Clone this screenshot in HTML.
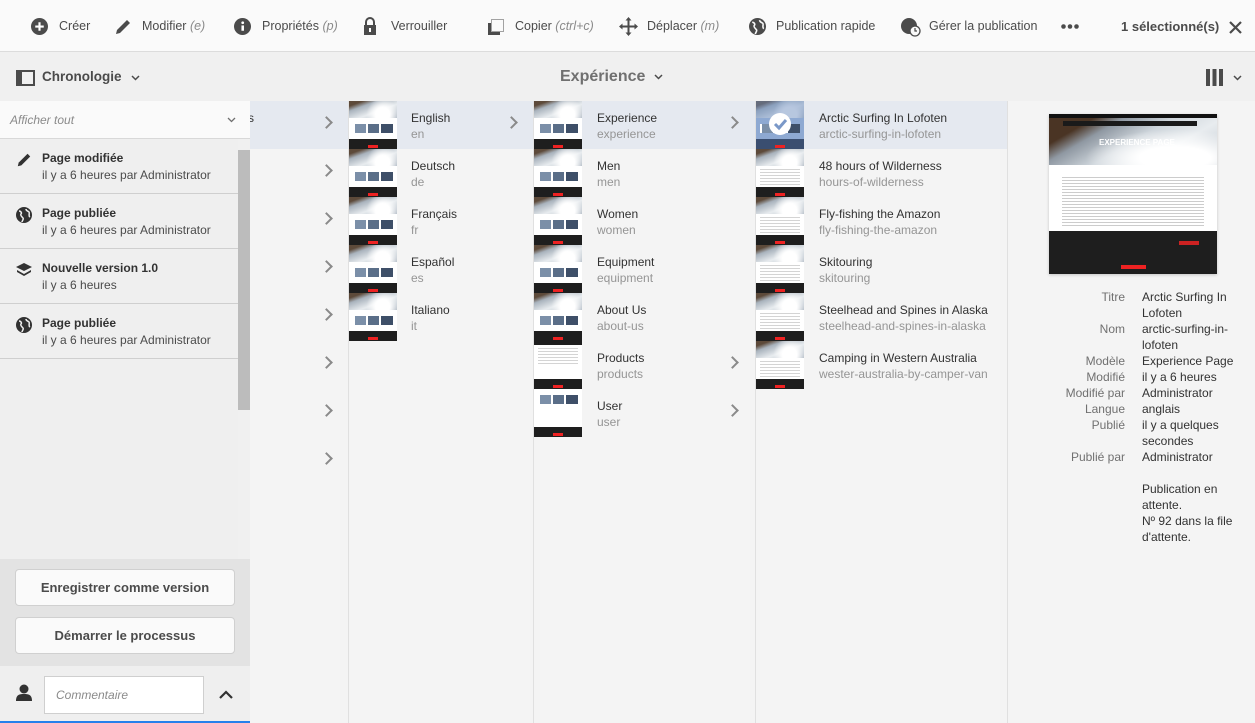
<!DOCTYPE html>
<html><head><meta charset="utf-8"><style>
*{box-sizing:border-box;margin:0;padding:0}
body{width:1255px;height:723px;overflow:hidden;font-family:"Liberation Sans",sans-serif;background:#f4f4f4;color:#323232;position:relative;font-size:13px}
.abs{position:absolute}
.tb{left:0;top:0;width:1255px;height:52px;background:#fafafa;border-bottom:1px solid #dcdcdc}
.tbi{position:absolute;top:19px;font-size:12.5px;color:#4b4b4b;white-space:nowrap}
.tbi i{color:#8a8a8a}
.hd{left:0;top:52px;width:1255px;height:49px;background:#f0f0f0}
.rail{left:0;top:101px;width:250px;height:622px;background:#efefef}
.col{top:101px;height:622px;border-right:1px solid #e0e0e0;background:#f4f4f4}
.row{position:absolute;height:48px;left:0;right:0}
.row.sel{background:#e5e9f0}
.row .t{position:absolute;top:10px;font-size:12px;color:#323232;white-space:nowrap}
.row .s{position:absolute;top:26px;font-size:12px;color:#959595;white-space:nowrap}
.chev{position:absolute;top:17px;width:9px;height:9px;border-right:2px solid #8a8a8a;border-top:2px solid #8a8a8a;transform:rotate(45deg)}
.th{position:absolute;left:0;top:0;width:48px;height:48px;overflow:hidden;background:#fff}
.th .a{height:17px;background:radial-gradient(circle at 70% 80%,#fff 0 20%,transparent 45%),linear-gradient(160deg,#5d4a3a 0 15%,#a9b3bd 30%,#e8ecef 60%,#aab4bf)}
.th .b{height:21px;background:#fff;position:relative}
.th .b:before{content:"";position:absolute;left:4px;top:6px;width:40px;height:9px;background:linear-gradient(90deg,#fff 0 2px,#7b8fa8 2px 13px,#fff 13px 15px,#5a6e88 15px 26px,#fff 26px 28px,#3e4f68 28px)}
.th .c{height:10px;background:#1e1e1e;position:relative}
.th .c:after{content:"";position:absolute;left:19px;top:6px;width:10px;height:3px;background:#e22}
.th.txt .b:before{left:4px;width:40px;top:3px;height:16px;background:repeating-linear-gradient(#d4d4d4 0 1px,#fff 1px 3px)}
.ri{position:absolute;left:0;width:238px;height:55px;border-bottom:1px solid #cfcfcf}
.ri b{position:absolute;left:42px;top:12px;font-size:12px;color:#323232}
.ri span{position:absolute;left:42px;top:29px;font-size:12px;color:#4b4b4b}
.btn{position:absolute;left:15px;width:220px;height:37px;background:#fafafa;border:1px solid #d0d0d0;border-radius:4px;font-weight:bold;font-size:13px;color:#4b4b4b;text-align:center;line-height:35px}
.pl{position:absolute;font-size:12px;color:#707070;text-align:right;width:100px;left:1025px}
.pv{position:absolute;font-size:12px;color:#323232;left:1142px;line-height:16px;width:110px}
</style></head><body>
<div class="abs tb"></div>
<svg class="abs" style="left:31px;top:18px" width="17" height="17" viewBox="0 0 16 16"><circle cx="8" cy="8" r="8" fill="#4b4b4b"/><path d="M8 4v8M4 8h8" stroke="#fff" stroke-width="2"/></svg>
<div class="tbi" style="left:59px">Créer</div>
<svg class="abs" style="left:114px;top:18px" width="18" height="18" viewBox="0 0 18 18"><path d="M2 16l1-4L13 2l3 3L6 15z" fill="#4b4b4b"/></svg>
<div class="tbi" style="left:142px">Modifier <i>(e)</i></div>
<svg class="abs" style="left:234px;top:18px" width="17" height="17" viewBox="0 0 16 16"><circle cx="8" cy="8" r="8" fill="#4b4b4b"/><rect x="7" y="7" width="2.4" height="5" fill="#fff"/><circle cx="8.2" cy="4.5" r="1.3" fill="#fff"/></svg>
<div class="tbi" style="left:262px">Propriétés <i>(p)</i></div>
<svg class="abs" style="left:362px;top:17px" width="16" height="19" viewBox="0 0 16 19"><path d="M4 8V5a4 4 0 0 1 8 0v3" fill="none" stroke="#4b4b4b" stroke-width="2"/><rect x="2" y="8" width="12" height="10" fill="#4b4b4b"/><rect x="7" y="11" width="2" height="4" fill="#fff"/></svg>
<div class="tbi" style="left:391px">Verrouiller</div>
<svg class="abs" style="left:487px;top:19px" width="18" height="17" viewBox="0 0 18 17"><rect x="4.5" y="0.5" width="12" height="12" fill="none" stroke="#4b4b4b" stroke-dasharray="1 1"/><path d="M1 4h3v9h9v3H1z" fill="#4b4b4b"/></svg>
<div class="tbi" style="left:515px">Copier <i>(ctrl+c)</i></div>
<svg class="abs" style="left:619px;top:17px" width="19" height="19" viewBox="0 0 19 19"><path d="M9.5 1v17M1 9.5h17" stroke="#4b4b4b" stroke-width="2"/><path d="M9.5 0l3 3.5h-6zM9.5 19l3-3.5h-6zM0 9.5l3.5-3v6zM19 9.5l-3.5-3v6z" fill="#4b4b4b"/></svg>
<div class="tbi" style="left:647px">Déplacer <i>(m)</i></div>
<svg class="abs" style="left:749px;top:18px" width="17" height="17" viewBox="0 0 16 16"><circle cx="8" cy="8" r="8" fill="#4b4b4b"/><path d="M3 4c2 0 3 2 2 3s1 3 2 4-1 3-1 4M10 2c0 2 2 2 3 3s-1 4 1 5" stroke="#fafafa" stroke-width="1.5" fill="none"/></svg>
<div class="tbi" style="left:776px">Publication rapide</div>
<svg class="abs" style="left:901px;top:18px" width="20" height="19" viewBox="0 0 20 19"><circle cx="8" cy="8" r="8" fill="#4b4b4b"/><circle cx="14" cy="13" r="5" fill="#fafafa" stroke="#4b4b4b" stroke-width="1.3"/><path d="M14 10v3h2" stroke="#4b4b4b" stroke-width="1.2" fill="none"/></svg>
<div class="tbi" style="left:929px">Gérer la publication</div>
<svg class="abs" style="left:1061px;top:24px" width="18" height="5"><circle cx="2.5" cy="2.5" r="2.3" fill="#4b4b4b"/><circle cx="9" cy="2.5" r="2.3" fill="#4b4b4b"/><circle cx="15.5" cy="2.5" r="2.3" fill="#4b4b4b"/></svg>
<div class="tbi" style="left:1121px;font-weight:bold;color:#4b4b4b;font-size:13px">1 sélectionné(s)</div>
<svg class="abs" style="left:1229px;top:21px" width="13" height="13" viewBox="0 0 13 13"><path d="M1 1l11 11M12 1L1 12" stroke="#4b4b4b" stroke-width="2.2"/></svg>

<div class="abs hd"></div>
<svg class="abs" style="left:16px;top:70px" width="19" height="16" viewBox="0 0 19 16"><rect x="1" y="1" width="17" height="14" fill="none" stroke="#4b4b4b" stroke-width="2"/><rect x="1" y="1" width="5" height="14" fill="#4b4b4b"/></svg>
<div class="abs" style="left:42px;top:69px;font-weight:bold;font-size:13.5px;color:#4b4b4b">Chronologie</div>
<svg class="abs" style="left:131px;top:75px" width="9" height="6"><path d="M1 1l3.5 3.5L8 1" stroke="#4b4b4b" stroke-width="1.5" fill="none"/></svg>
<div class="abs" style="left:560px;top:68px;font-weight:bold;font-size:16px;color:#707070">Expérience</div>
<svg class="abs" style="left:654px;top:74px" width="9" height="6"><path d="M1 1l3.5 3.5L8 1" stroke="#4b4b4b" stroke-width="1.5" fill="none"/></svg>
<svg class="abs" style="left:1206px;top:69px" width="18" height="17"><rect x="0" y="0" width="4" height="17" fill="#4b4b4b"/><rect x="6.5" y="0" width="4" height="17" fill="#4b4b4b"/><rect x="13" y="0" width="4" height="17" fill="#4b4b4b"/></svg>
<svg class="abs" style="left:1233px;top:75px" width="9" height="6"><path d="M1 1l3.5 3.5L8 1" stroke="#4b4b4b" stroke-width="1.5" fill="none"/></svg>

<!-- col0 -->
<div class="abs col" style="left:250px;width:99px">
  <div class="row sel" style="top:0"><div class="t" style="left:-2px">s</div><div class="chev" style="left:72px"></div></div>
  <div class="row" style="top:48px"><div class="chev" style="left:72px"></div></div>
  <div class="row" style="top:96px"><div class="chev" style="left:72px"></div></div>
  <div class="row" style="top:144px"><div class="chev" style="left:72px"></div></div>
  <div class="row" style="top:192px"><div class="chev" style="left:72px"></div></div>
  <div class="row" style="top:240px"><div class="chev" style="left:72px"></div></div>
  <div class="row" style="top:288px"><div class="chev" style="left:72px"></div></div>
  <div class="row" style="top:336px"><div class="chev" style="left:72px"></div></div>
</div>
<!-- col1 -->
<div class="abs col" style="left:349px;width:185px">
  <div class="row sel" style="top:0"><div class="th"><div class="a"></div><div class="b"></div><div class="c"></div></div><div class="t" style="left:62px">English</div><div class="s" style="left:62px">en</div><div class="chev" style="left:158px"></div></div>
  <div class="row" style="top:48px"><div class="th"><div class="a"></div><div class="b"></div><div class="c"></div></div><div class="t" style="left:62px">Deutsch</div><div class="s" style="left:62px">de</div></div>
  <div class="row" style="top:96px"><div class="th"><div class="a"></div><div class="b"></div><div class="c"></div></div><div class="t" style="left:62px">Français</div><div class="s" style="left:62px">fr</div></div>
  <div class="row" style="top:144px"><div class="th"><div class="a"></div><div class="b"></div><div class="c"></div></div><div class="t" style="left:62px">Español</div><div class="s" style="left:62px">es</div></div>
  <div class="row" style="top:192px"><div class="th"><div class="a"></div><div class="b"></div><div class="c"></div></div><div class="t" style="left:62px">Italiano</div><div class="s" style="left:62px">it</div></div>
</div>
<!-- col2 -->
<div class="abs col" style="left:534px;width:222px">
  <div class="row sel" style="top:0"><div class="th"><div class="a"></div><div class="b"></div><div class="c"></div></div><div class="t" style="left:63px">Experience</div><div class="s" style="left:63px">experience</div><div class="chev" style="left:194px"></div></div>
  <div class="row" style="top:48px"><div class="th"><div class="a"></div><div class="b"></div><div class="c"></div></div><div class="t" style="left:63px">Men</div><div class="s" style="left:63px">men</div></div>
  <div class="row" style="top:96px"><div class="th"><div class="a"></div><div class="b"></div><div class="c"></div></div><div class="t" style="left:63px">Women</div><div class="s" style="left:63px">women</div></div>
  <div class="row" style="top:144px"><div class="th"><div class="a"></div><div class="b"></div><div class="c"></div></div><div class="t" style="left:63px">Equipment</div><div class="s" style="left:63px">equipment</div></div>
  <div class="row" style="top:192px"><div class="th"><div class="a"></div><div class="b"></div><div class="c"></div></div><div class="t" style="left:63px">About Us</div><div class="s" style="left:63px">about-us</div></div>
  <div class="row" style="top:240px"><div class="th txt"><div class="c" style="height:4px"></div><div class="b" style="height:34px"></div><div class="c"></div></div><div class="t" style="left:63px">Products</div><div class="s" style="left:63px">products</div><div class="chev" style="left:194px"></div></div>
  <div class="row" style="top:288px"><div class="th"><div class="b" style="height:38px;background:#fff"></div><div class="c"></div></div><div class="t" style="left:63px">User</div><div class="s" style="left:63px">user</div><div class="chev" style="left:194px"></div></div>
</div>
<!-- col3 -->
<div class="abs col" style="left:756px;width:252px">
  <div class="row sel" style="top:0"><div class="th" style="background:#6f8fc0"><div class="a" style="opacity:.5"></div><div class="b" style="background:#8ea9d2"></div><div class="c" style="background:#3a4e70"></div><svg style="position:absolute;left:13px;top:12px" width="22" height="22"><circle cx="11" cy="11" r="11" fill="#fff"/><path d="M6 11l4 4 7-8" stroke="#7a98c8" stroke-width="3" fill="none"/></svg></div><div class="t" style="left:63px">Arctic Surfing In Lofoten</div><div class="s" style="left:63px">arctic-surfing-in-lofoten</div></div>
  <div class="row" style="top:48px"><div class="th txt"><div class="a"></div><div class="b"></div><div class="c"></div></div><div class="t" style="left:63px">48 hours of Wilderness</div><div class="s" style="left:63px">hours-of-wilderness</div></div>
  <div class="row" style="top:96px"><div class="th txt"><div class="a"></div><div class="b"></div><div class="c"></div></div><div class="t" style="left:63px">Fly-fishing the Amazon</div><div class="s" style="left:63px">fly-fishing-the-amazon</div></div>
  <div class="row" style="top:144px"><div class="th txt"><div class="a"></div><div class="b"></div><div class="c"></div></div><div class="t" style="left:63px">Skitouring</div><div class="s" style="left:63px">skitouring</div></div>
  <div class="row" style="top:192px"><div class="th txt"><div class="a"></div><div class="b"></div><div class="c"></div></div><div class="t" style="left:63px">Steelhead and Spines in Alaska</div><div class="s" style="left:63px">steelhead-and-spines-in-alaska</div></div>
  <div class="row" style="top:240px"><div class="th txt"><div class="a"></div><div class="b"></div><div class="c"></div></div><div class="t" style="left:63px">Camping in Western Australia</div><div class="s" style="left:63px">wester-australia-by-camper-van</div></div>
</div>
<!-- preview -->
<div class="abs" style="left:1049px;top:114px;width:168px;height:160px;background:#fff;box-shadow:0 1px 3px rgba(0,0,0,.2)">
  <div style="height:4px;background:#111"></div>
  <div style="height:47px;background:radial-gradient(ellipse at 75% 85%,#fff 0 20%,transparent 50%),linear-gradient(150deg,#4a3424 0 18%,#8f98a2 30%,#cfd6dc 50%,#e8ecef 70%,#c0c8d0);position:relative"><div style="position:absolute;left:14px;top:3px;width:134px;height:5px;background:#1a1a1a"></div><div style="position:absolute;left:50px;top:20px;color:#fff;font-size:8px;font-weight:bold">EXPERIENCE PAGE</div></div>
  <div style="height:66px;padding:12px 13px 0;background:#fff"><div style="height:50px;background:repeating-linear-gradient(#ccc 0 1px,#fff 1px 3px)"></div></div>
  <div style="height:43px;background:#1e1e1e;position:relative"><div style="position:absolute;left:72px;top:34px;width:25px;height:4px;background:#e22"></div><div style="position:absolute;left:130px;top:10px;width:20px;height:4px;background:#c22"></div></div>
</div>
<div class="pl" style="top:290px">Titre</div><div class="pv" style="top:289px">Arctic Surfing In Lofoten</div>
<div class="pl" style="top:322px">Nom</div><div class="pv" style="top:321px">arctic-surfing-in-lofoten</div>
<div class="pl" style="top:354px">Modèle</div><div class="pv" style="top:353px">Experience Page</div>
<div class="pl" style="top:370px">Modifié</div><div class="pv" style="top:369px">il y a 6 heures</div>
<div class="pl" style="top:386px">Modifié par</div><div class="pv" style="top:385px">Administrator</div>
<div class="pl" style="top:402px">Langue</div><div class="pv" style="top:401px">anglais</div>
<div class="pl" style="top:418px">Publié</div><div class="pv" style="top:417px">il y a quelques secondes</div>
<div class="pl" style="top:450px">Publié par</div><div class="pv" style="top:449px">Administrator</div>
<div class="pv" style="top:481px">Publication en attente.<br>Nº 92 dans la file d'attente.</div>

<!-- rail -->
<div class="abs rail">
  <div style="position:absolute;left:0;top:0;width:250px;height:38px;background:#fafafa;border-bottom:1px solid #d8d8d8"><span style="position:absolute;left:10px;top:12px;font-style:italic;font-size:12px;color:#8a8a8a">Afficher tout</span><svg style="position:absolute;left:227px;top:16px" width="9" height="6"><path d="M1 1l3.5 3.5L8 1" stroke="#707070" stroke-width="1.3" fill="none"/></svg></div>
  <div style="position:absolute;left:238px;top:38px;width:12px;height:420px;background:#f0f0f0"></div>
  <div style="position:absolute;left:238px;top:49px;width:12px;height:260px;background:#bcbcbc"></div>
  <div class="ri" style="top:38px"><svg style="position:absolute;left:16px;top:13px" width="16" height="16" viewBox="0 0 18 18"><path d="M2 16l1-4L13 2l3 3L6 15z" fill="#323232"/></svg><b>Page modifiée</b><span>il y a 6 heures par Administrator</span></div>
  <div class="ri" style="top:93px"><svg style="position:absolute;left:16px;top:13px" width="16" height="16" viewBox="0 0 16 16"><circle cx="8" cy="8" r="8" fill="#323232"/><path d="M3 4c2 0 3 2 2 3s1 3 2 4-1 3-1 4M10 2c0 2 2 2 3 3s-1 4 1 5" stroke="#efefef" stroke-width="1.5" fill="none"/></svg><b>Page publiée</b><span>il y a 6 heures par Administrator</span></div>
  <div class="ri" style="top:148px"><svg style="position:absolute;left:16px;top:13px" width="16" height="16" viewBox="0 0 16 16"><path d="M8 1l8 4-8 4-8-4z" fill="#323232"/><path d="M1 8l7 4 7-4v2l-7 4-7-4z" fill="#323232"/></svg><b>Nouvelle version 1.0</b><span>il y a 6 heures</span></div>
  <div class="ri" style="top:203px"><svg style="position:absolute;left:16px;top:13px" width="16" height="16" viewBox="0 0 16 16"><circle cx="8" cy="8" r="8" fill="#323232"/><path d="M3 4c2 0 3 2 2 3s1 3 2 4-1 3-1 4M10 2c0 2 2 2 3 3s-1 4 1 5" stroke="#efefef" stroke-width="1.5" fill="none"/></svg><b>Page publiée</b><span>il y a 6 heures par Administrator</span></div>
  <div style="position:absolute;left:0;top:458px;width:250px;height:107px;background:#e3e3e3"></div>
  <div class="btn" style="top:468px">Enregistrer comme version</div>
  <div class="btn" style="top:516px">Démarrer le processus</div>
  <div style="position:absolute;left:0;top:565px;width:250px;height:57px;background:#efefef;border-bottom:2px solid #2680eb"></div>
  <svg style="position:absolute;left:16px;top:583px" width="16" height="17" viewBox="0 0 16 17"><circle cx="8" cy="5" r="4.5" fill="#323232"/><path d="M0 17c0-6 3-7 8-7s8 1 8 7z" fill="#323232"/></svg>
  <div style="position:absolute;left:44px;top:575px;width:160px;height:38px;background:#fff;border:1px solid #cfcfcf;font-style:italic;font-size:12px;color:#8a8a8a;padding:11px 11px">Commentaire</div>
  <svg style="position:absolute;left:219px;top:589px" width="14" height="9"><path d="M1 8l6-6 6 6" stroke="#323232" stroke-width="2.2" fill="none"/></svg>
</div>
</body></html>
